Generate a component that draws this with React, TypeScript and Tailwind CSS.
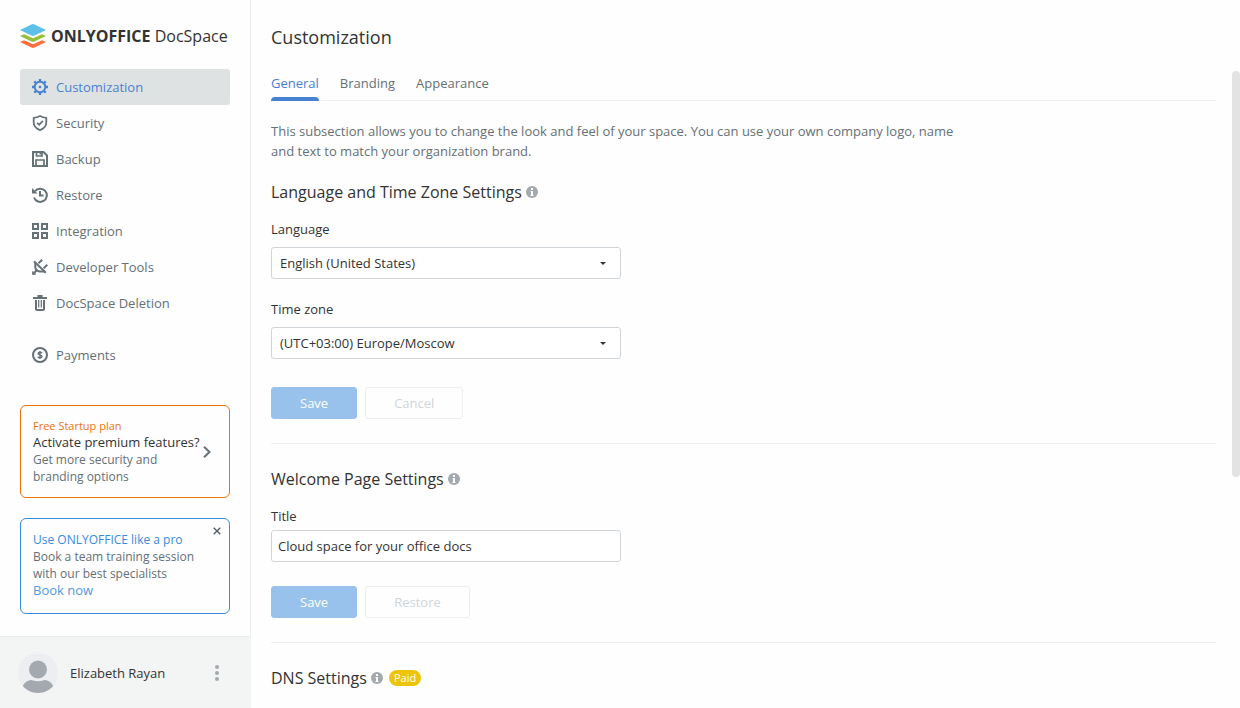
import { useState, type ReactNode } from "react";

interface INavItem {
    label: string;
    icon: ReactNode;
}

const GearIcon = () => (
    <svg viewBox="0 0 16 16" className="size-4" fill="none" stroke="currentColor">
        <circle cx="8" cy="8" r="5.300" strokeWidth="1.900" />
        <circle cx="8" cy="8" r="1.300" fill="currentColor" stroke="none" />
        <path d="M8 0v2.500M8 13.500V16M0 8h2.500M13.500 8H16M2.300 2.300l1.700 1.700M12 12l1.700 1.700M2.300 13.700L4 12M12 4l1.700-1.700" strokeWidth="2.400" />
    </svg>
);

const ShieldIcon = () => (
    <svg viewBox="0 0 16 16" className="size-4" fill="none" stroke="currentColor" strokeWidth="1.8">
        <path d="M8 1c2 1.200 4 1.700 6.300 1.800V7.500c0 3.500-2.300 6-6.300 7.600C4 13.500 1.700 11 1.700 7.500V2.800C4 2.700 6 2.200 8 1z" strokeLinejoin="round" />
        <path d="M5.200 7.800l2 2L10.800 5.800" />
    </svg>
);

const FloppyIcon = () => (
    <svg viewBox="0 0 16 16" className="size-4" fill="none" stroke="currentColor" strokeWidth="2">
        <path d="M1 1h10.500L15 4.500V15H1z" />
        <path d="M4.500 1v4H10V1M4 15V9h8v6" strokeWidth="1.700" />
        <path d="M8.300 1v2.500" strokeWidth="1.500" />
    </svg>
);

const HistoryIcon = () => (
    <svg viewBox="0 0 16 16" className="size-4" fill="none" stroke="currentColor" strokeWidth="2">
        <path d="M3 4.200A6.600 6.600 0 1 1 2 10.500" />
        <path d="M8 4v4.600h3.500" />
        <path d="M0 1v5.500h5.500z" fill="currentColor" stroke="none" />
    </svg>
);

const GridIcon = () => (
    <svg viewBox="0 0 16 16" className="size-4" fill="none" stroke="currentColor" strokeWidth="2">
        <path d="M1 1h5v5H1zM10 1h5v5h-5zM1 10h5v5H1zM10 10h5v5h-5z" />
    </svg>
);

const PlugIcon = () => (
    <svg viewBox="0 0 16 16" className="size-4" fill="none" stroke="currentColor" strokeWidth="2">
        <path d="M2 2.200l11.800 11.600" />
        <path d="M3.300 3.800v4.400c0 1.500.7 2.500 1.700 3.200s2 1.200 3.200 1.200h4.400M4.800 11.200L.8 15.200M6.500 4.300L10.200.8M11.600 9.400l3.700-3.600" />
        <path d="M.8 12.300v2.900h3" strokeWidth="1.200" />
    </svg>
);

const TrashIcon = () => (
    <svg viewBox="0 0 16 16" className="size-4" fill="none" stroke="currentColor">
        <path d="M1 3h14M5.500 1h5" strokeWidth="2" />
        <path d="M4 5v8.500C4 14.500 4.500 15 5.500 15h5c1 0 1.500-.5 1.500-1.500V5" strokeWidth="2" />
        <path d="M6.700 5v7.500M9.300 5v7.500" strokeWidth="1.200" />
    </svg>
);

const DollarIcon = () => (
    <svg viewBox="0 0 16 16" className="size-4" fill="none" stroke="currentColor">
        <circle cx="8" cy="8" r="7" strokeWidth="2" />
        <path d="M10 6.200C9.600 5.500 9 5.200 8 5.200c-1.100 0-1.900.5-1.900 1.300 0 1.900 3.900 1 3.900 3 0 .8-.8 1.400-2 1.400-1 0-1.800-.4-2.200-1.200M8 4v8" strokeWidth="1.400" />
    </svg>
);

const InfoIcon = () => (
    <svg viewBox="0 0 12 12" className="size-3">
        <circle cx="6" cy="6" r="6" fill="#a3a9ae" />
        <path d="M5 2h2v2H5zM4.500 5H7v4h.5v1h-3V9H5V6h-.5z" fill="#fff" />
    </svg>
);

const Logo = () => (
    <svg viewBox="0 0 26 24" className="h-6 w-[26px] shrink-0">
        <path d="M0 18l4-1.700 9 4 9-4 4 1.700-11.500 5.600q-1.500.7-3 0z" fill="#ff6f3d" />
        <path d="M0 12l4-1.700 9 4 9-4 4 1.700-11.500 5.600q-1.500.7-3 0z" fill="#95c038" />
        <path d="M0 6L11.500.4q1.500-.7 3 0L26 6l-11.500 5.600q-1.500.7-3 0z" fill="#5dc0e8" />
    </svg>
);

const navItems: INavItem[] = [
    { label: "Customization", icon: <GearIcon /> },
    { label: "Security", icon: <ShieldIcon /> },
    { label: "Backup", icon: <FloppyIcon /> },
    { label: "Restore", icon: <HistoryIcon /> },
    { label: "Integration", icon: <GridIcon /> },
    { label: "Developer Tools", icon: <PlugIcon /> },
    { label: "DocSpace Deletion", icon: <TrashIcon /> },
    { label: "Payments", icon: <DollarIcon /> },
];

const tabs = ["General", "Branding", "Appearance"];

function Sidebar() {
    const [active, setActive] = useState("Customization");
    const [showTraining, setShowTraining] = useState(true);

    return (
        <aside className="flex w-[251px] shrink-0 flex-col border-r border-[#eceef1]">
            <a href="#" className="mx-5 mt-6 flex h-6 items-center gap-[5px] text-base whitespace-nowrap text-[#333]">
                <Logo />
                <span><b>ONLYOFFICE</b> DocSpace</span>
            </a>

            <nav className="mx-5 mt-[21px] flex flex-col">
                {navItems.map(({ label, icon }) => (
                    <a
                        key={label}
                        href="#"
                        onClick={() => setActive(label)}
                        className={`flex h-9 items-center gap-2 rounded-[3px] px-3 last:mt-4 ${active === label ? "bg-[#dfe2e3] text-[#4781d1]" : "text-[#657077]"}`}
                    >
                        {icon}
                        {label}
                    </a>
                ))}
            </nav>

            <a href="#" className="mx-5 mt-8 flex items-center rounded-md border border-[#ed7309] p-3 text-xs leading-[17px] text-[#657077]">
                <div className="whitespace-nowrap">
                    <p className="text-[11px] leading-4 text-[#ed7309]">Free Startup plan</p>
                    <p className="text-[13px] leading-[17px] text-[#333]">Activate premium features?</p>
                    <p>Get more security and<br />branding options</p>
                </div>
                <svg viewBox="0 0 8 12" className="ml-[3px] h-3 w-2 shrink-0" fill="none" stroke="#657077" strokeWidth="2">
                    <path d="M1 .8L6.500 6 1 11.200" />
                </svg>
            </a>

            {showTraining && (
                <div className="relative mx-5 mt-5 rounded-md border border-[#388bde] px-3 pt-3 pb-[14px] text-xs leading-[17px] text-[#657077]">
                    <p className="text-[#388bde]">Use ONLYOFFICE like a pro</p>
                    <p>Book a team training session<br />with our best specialists</p>
                    <a href="#" className="block text-[13px] leading-[17px] text-[#5299e0]">Book now</a>
                    <button type="button" aria-label="Close" onClick={() => setShowTraining(false)} className="absolute top-2 right-2">
                        <svg viewBox="0 0 8 8" className="size-2" fill="none" stroke="#555f65" strokeWidth="1.400">
                            <path d="M.7.7l6.600 6.600M7.300.7L.7 7.300" />
                        </svg>
                    </button>
                </div>
            )}

            <div className="mt-auto -mr-px flex h-[72px] items-center border-t border-[#eceef1] bg-[#f3f4f4] pr-7 pl-[18px] text-[#333]">
                <svg viewBox="0 0 40 40" className="size-10">
                    <circle cx="20" cy="20" r="20" fill="#eceef1" />
                    <circle cx="20" cy="16.500" r="9" fill="#a3a9ae" />
                    <path d="M4.800 33c1.600-3.200 4.200-5.500 8-6 1.800-.1 3.600 1.300 7.200 1.300s5.400-1.400 7.200-1.300c3.800.5 6.400 2.800 8 6-3.400 4.200-9 7-15.200 7S8.200 37.200 4.800 33z" fill="#a3a9ae" />
                </svg>
                <span className="ml-3">Elizabeth Rayan</span>
                <button type="button" aria-label="Profile menu" className="ml-auto px-1">
                    <svg viewBox="0 0 4 16" className="h-4 w-1" fill="#a3a9ae">
                        <circle cx="2" cy="2" r="2" />
                        <circle cx="2" cy="8" r="2" />
                        <circle cx="2" cy="14" r="2" />
                    </svg>
                </button>
            </div>
        </aside>
    );
}

function SectionTitle({ children }: { children: ReactNode }) {
    return (
        <div className="flex items-center gap-1">
            <h2 className="text-base leading-[22px]">{children}</h2>
            <button type="button" aria-label="More information"><InfoIcon /></button>
        </div>
    );
}

function SelectField({ id, label, options }: { id: string; label: string; options: string[] }) {
    return (
        <div className="flex max-w-[350px] flex-col gap-2">
            <label htmlFor={id}>{label}</label>
            <div className="relative">
                <select id={id} className="h-8 w-full appearance-none rounded-[3px] border border-[#d0d5da] bg-white px-2">
                    {options.map(option => <option key={option}>{option}</option>)}
                </select>
                <svg viewBox="0 0 6 3" className="pointer-events-none absolute top-[15px] right-[15px] h-[3px] w-1.5" fill="#333">
                    <path d="M0 0h6L3 3z" />
                </svg>
            </div>
        </div>
    );
}

function Actions({ secondary }: { secondary: string }) {
    return (
        <div className="flex gap-2 font-medium">
            <button type="button" disabled className="h-8 rounded-[3px] border border-[#98c2ec] bg-[#98c2ec] px-7 text-white">Save</button>
            <button type="button" disabled className="h-8 rounded-[3px] border border-[#eceef1] px-7 text-[#d0d5da]">{secondary}</button>
        </div>
    );
}

export default function App() {
    const [tab, setTab] = useState("General");
    const [title, setTitle] = useState("Cloud space for your office docs");

    return (
        <div className="flex h-screen overflow-hidden bg-[#fefefe] font-['Open_Sans',sans-serif] text-[13px] leading-5 text-[#333]">
            <Sidebar />

            <main className="relative min-w-0 flex-1 overflow-hidden pt-[25px] pr-6 pl-5">
                <h1 className="text-lg leading-6">Customization</h1>

                <div role="tablist" className="mt-6 flex gap-[21px] border-b border-[#eceef1]">
                    {tabs.map(name => (
                        <button
                            key={name}
                            type="button"
                            role="tab"
                            aria-selected={tab === name}
                            onClick={() => setTab(name)}
                            className={`-mb-px flex flex-col gap-1 ${tab === name ? "text-[#4781d1]" : "text-[#657077]"}`}
                        >
                            {name}
                            <span className={`h-1 w-full rounded-t-sm ${tab === name ? "bg-[#4781d1]" : ""}`} />
                        </button>
                    ))}
                </div>

                <p className="mt-5 max-w-[700px] text-[#657077]">
                    This subsection allows you to change the look and feel of your space. You can use your own company logo, name and text to match your organization brand.
                </p>

                <section className="mt-5 border-b border-[#eceef1] pb-6">
                    <SectionTitle>Language and Time Zone Settings</SectionTitle>
                    <div className="mt-4 mb-7 flex flex-col gap-5">
                        <SelectField id="language" label="Language" options={["English (United States)"]} />
                        <SelectField id="timezone" label="Time zone" options={["(UTC+03:00) Europe/Moscow"]} />
                    </div>
                    <Actions secondary="Cancel" />
                </section>

                <section className="mt-6 border-b border-[#eceef1] pb-6">
                    <SectionTitle>Welcome Page Settings</SectionTitle>
                    <div className="mt-4 mb-6 flex max-w-[350px] flex-col gap-1">
                        <label htmlFor="title">Title</label>
                        <input
                            id="title"
                            type="text"
                            value={title}
                            onChange={e => setTitle(e.target.value)}
                            className="h-8 rounded-[3px] border border-[#d0d5da] bg-white px-1.5"
                        />
                    </div>
                    <Actions secondary="Restore" />
                </section>

                <section className="mt-6 flex items-center gap-1.5">
                    <SectionTitle>DNS Settings</SectionTitle>
                    <span className="rounded-full bg-[#edc409] px-[5px] text-[11px] leading-4 font-medium text-white">Paid</span>
                </section>

                {/* scrollbar thumb */}
                <div className="absolute top-[10%] right-0 h-[57.4%] w-2 rounded-full bg-[#e3e3e3]" />
            </main>
        </div>
    );
}
